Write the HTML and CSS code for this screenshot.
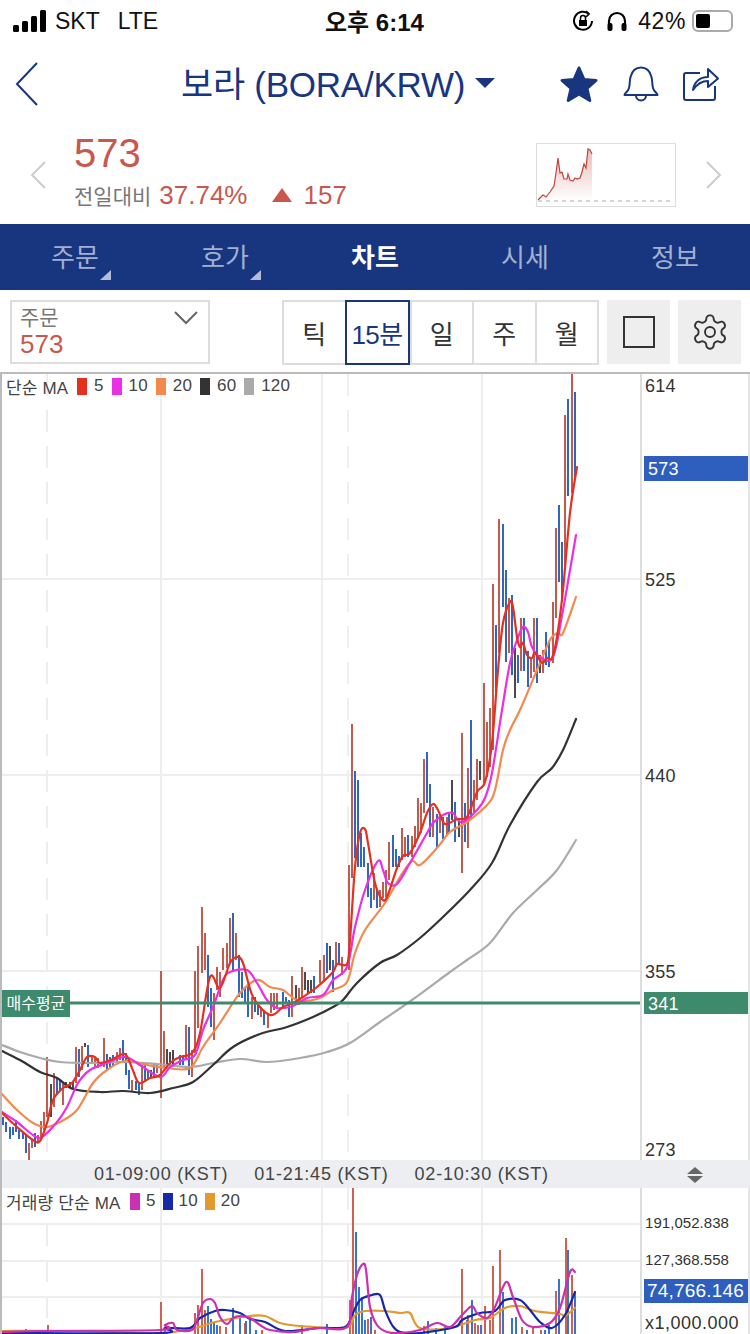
FILE: index.html
```html
<!DOCTYPE html>
<html lang="ko">
<head>
  <meta charset="UTF-8" />
  <meta name="viewport" content="width=device-width, initial-scale=1.0" />
  <title>보라 (BORA/KRW) 차트</title>
  <link rel="stylesheet" href="styles.css">
</head>
<body>
  <div class="status">
    <div class="status-left">
      <svg class="signal" width="33" height="22" viewBox="0 0 33 22"><rect x="0" y="15" width="6" height="7" rx="1.5"/><rect x="9" y="11" width="6" height="11" rx="1.5"/><rect x="18" y="6" width="6" height="16" rx="1.5"/><rect x="27" y="0" width="6" height="22" rx="1.5"/></svg>
      <span class="carrier">SKT</span>
      <span class="carrier">LTE</span>
    </div>
    <div class="status-time">오후 6:14</div>
    <div class="status-right">
      <svg width="22" height="24" viewBox="0 0 22 24" fill="none" stroke="#000" stroke-width="2"><path d="M17 5a9 9 0 1 0 3 7"/><path d="M14 2l3 3-3 3" stroke-width="1.6"/><rect x="7" y="11" width="8" height="6" fill="#000" stroke="none"/><path d="M8.500 11V9a2.500 2.500 0 0 1 5 0v2" stroke-width="1.500"/></svg>
      <svg class="phones" width="20" height="21" viewBox="0 0 20 21" fill="none"><path d="M2 14V10a8 8 0 0 1 16 0v4" stroke="#000" stroke-width="2.200"/><rect x="0.500" y="12" width="5" height="8" rx="2" fill="#000"/><rect x="14.500" y="12" width="5" height="8" rx="2" fill="#000"/></svg>
      <span class="battery-text">42%</span>
      <div class="battery"><div class="battery-fill"></div></div>
    </div>
  </div>

  <div class="header">
    <svg class="back" width="24" height="44" viewBox="0 0 24 44" fill="none" stroke="#18367f" stroke-width="2"><path d="M22 1L2 22l20 21"/></svg>
    <h1 class="title">보라 (BORA/KRW)<span class="title-caret"></span></h1>
    <div class="header-icons">
      <svg width="40" height="38" viewBox="0 0 40 38"><path d="M20 3l5 11.500 12 1-9 8 2.800 12L20 29l-10.800 6.500L12 23.500l-9-8 12-1z" fill="#18367f" stroke="#18367f" stroke-width="3" stroke-linejoin="round"/></svg>
      <svg width="36" height="36" viewBox="0 0 36 36" fill="none" stroke="#18367f" stroke-width="2"><path d="M1.500 29c0-2 3.500-3 4.500-7 1-4 .500-7 1.500-11C9 5 13 1.500 18 1.500S27 5 28.500 11c1 4 .500 7 1.500 11 1 4 4.500 5 4.500 7z" stroke-linejoin="round"/><path d="M13 29.500a5 5 0 0 0 10 0"/></svg>
      <svg width="37" height="35" viewBox="0 0 37 35" fill="none" stroke="#18367f" stroke-width="2"><path d="M17 6H3a2 2 0 0 0-2 2v23a2 2 0 0 0 2 2h27a2 2 0 0 0 2-2V19"/><path d="M10 23c1-8 7-13 15-13V2l10 9.500L25 20v-6c-6 0-11 3-15 9z" stroke-linejoin="round"/></svg>
    </div>
  </div>

  <div class="price-row">
    <svg class="side-arrow" width="16" height="28" viewBox="0 0 16 28" fill="none" stroke="#ccc" stroke-width="2"><path d="M15 1L2 14l13 13"/></svg>
    <div class="price-info">
      <div class="price">573</div>
      <div class="change">
        <span class="change-label">전일대비</span>
        <span class="change-num">37.74%</span>
        <span class="up-mark"></span>
        <span class="change-num">157</span>
      </div>
    </div>
    <div class="spark">
      <svg width="138" height="62" viewBox="537 144 138 62">
        <defs><linearGradient id="sparkfill" x1="0" y1="0" x2="0" y2="1"><stop offset="0" stop-color="#c8584e" stop-opacity=".4"/><stop offset="1" stop-color="#c8584e" stop-opacity="0"/></linearGradient></defs>
        <path fill="url(#sparkfill)" d="M538 200L540 198 543 195 546 197 550 192 554 186 556 173 558 158 560 173 562 172 564 179 567 179 568 174 570 180 573 181 575 178 577 179 580 178 582 172 584 164 586 168 588 149 590 150 592 154V201H538z"/>
        <polyline fill="none" stroke="#c0443a" stroke-width="1.200" points="538,200 540,198 543,195 546,197 550,192 554,186 556,173 558,158 560,173 562,172 564,179 567,179 568,174 570,180 573,181 575,178 577,179 580,178 582,172 584,164 586,168 588,149 590,150 592,154"/>
        <path d="M538 201H671" stroke="#c8c8c8" stroke-width="1.500" stroke-dasharray="4 4"/>
      </svg>
    </div>
    <svg class="side-arrow" width="16" height="28" viewBox="0 0 16 28" fill="none" stroke="#ccc" stroke-width="2"><path d="M1 1l13 13L1 27"/></svg>
  </div>

  <div class="tabs">
    <div class="tab has-corner">주문</div>
    <div class="tab has-corner">호가</div>
    <div class="tab active">차트</div>
    <div class="tab">시세</div>
    <div class="tab">정보</div>
  </div>

  <div class="toolbar">
    <div class="order-select">
      <div class="order-label">주문</div>
      <div class="order-price">573</div>
      <svg class="order-chevron" width="24" height="14" viewBox="0 0 24 14" fill="none" stroke="#666" stroke-width="2"><path d="M1 1l11 11L23 1"/></svg>
    </div>
    <div class="periods">
      <div class="period">틱</div>
      <div class="period selected">15분</div>
      <div class="period">일</div>
      <div class="period">주</div>
      <div class="period">월</div>
    </div>
    <div class="tool-btn"><div class="tool-square"></div></div>
    <div class="tool-btn">
      <svg width="40" height="40" viewBox="0 0 24 24" fill="none" stroke="#333" stroke-width="1.150"><path d="M12.220 2h-.44a2 2 0 0 0-2 2v.18a2 2 0 0 1-1 1.730l-.43.25a2 2 0 0 1-2 0l-.15-.08a2 2 0 0 0-2.730.73l-.22.38a2 2 0 0 0 .73 2.730l.15.1a2 2 0 0 1 1 1.720v.51a2 2 0 0 1-1 1.740l-.15.09a2 2 0 0 0-.73 2.730l.22.38a2 2 0 0 0 2.730.73l.15-.08a2 2 0 0 1 2 0l.43.25a2 2 0 0 1 1 1.730V20a2 2 0 0 0 2 2h.44a2 2 0 0 0 2-2v-.18a2 2 0 0 1 1-1.730l.43-.25a2 2 0 0 1 2 0l.15.08a2 2 0 0 0 2.730-.73l.22-.39a2 2 0 0 0-.73-2.730l-.15-.08a2 2 0 0 1-1-1.740v-.5a2 2 0 0 1 1-1.740l.15-.09a2 2 0 0 0 .73-2.730l-.22-.38a2 2 0 0 0-2.730-.73l-.15.08a2 2 0 0 1-2 0l-.43-.25a2 2 0 0 1-1-1.730V4a2 2 0 0 0-2-2z"/><circle cx="12" cy="12" r="3"/></svg>
    </div>
  </div>

  <div class="chart">
    <div class="panel panel-main">
      <div class="plot">
        <svg width="638" height="786" viewBox="2 374 638 786">
          <path class="grid" d="M2 579H640M2 775H640M2 971H640M161 374V1160M322 374V1160M482 374V1160"/>
          <path class="grid" stroke-dasharray="22 14" d="M47 374V1160M348 374V1160"/>
          <path class="candle-red" d="M29 1143V1160M32 1140V1148M38 1135V1142M41 1121V1140M44 1112V1130M47 1057V1117M54 1073V1107M63 1083V1105M76 1047V1083M82 1046V1070M92 1057V1064M95 1057V1067M98 1058V1068M104 1038V1067M117 1052V1063M120 1048V1060M132 1080V1092M142 1065V1090M157 1063V1073M161 971V1098M164 1031V1067M186 1025V1060M192 1050V1077M195 971V1053M198 946V1028M202 907V973M205 933V970M214 993V1040M217 967V990M220 972V997M223 948V970M227 943V968M230 918V963M236 933V960M252 997V1019M261 1007V1017M268 1013V1028M271 993V1013M274 993V1010M277 993V1008M292 976V1017M299 988V1005M302 967V998M320 960V983M324 955V982M336 942V967M342 957V975M349 865V970M352 724V878M374 873V900M380 890V907M383 882V898M386 870V897M389 842V880M402 828V860M405 837V857M412 836V857M415 826V847M418 798V837M421 803V833M424 759V813M433 807V837M440 817V833M447 817V836M462 733V873M468 768V848M474 780V813M477 759V800M484 683V783M487 722V777M490 708V767M493 584V750M499 519V653M509 598V653M521 618V671M531 657V678M534 618V672M543 650V673M553 602V663M556 528V618M565 415V570M572 373V493"/>
          <path class="candle-blue" d="M3 1117V1125M6 1122V1132M10 1127V1139M13 1127V1135M16 1120V1132M19 1130V1139M23 1133V1139M26 1135V1153M35 1133V1147M57 1077V1095M60 1080V1090M79 1049V1077M88 1045V1067M107 1054V1070M110 1057V1068M113 1055V1066M123 1040V1063M126 1053V1075M129 1070V1089M136 1081V1090M139 1082V1095M145 1063V1082M148 1070V1080M154 1063V1077M180 1055V1065M183 1055V1065M189 1027V1075M208 955V1007M211 988V1027M233 913V972M239 955V997M242 972V998M245 987V1002M248 985V1017M255 997V1012M258 1003V1015M264 1012V1025M283 992V1007M286 997V1003M289 1000V1017M314 976V993M327 943V973M333 960V992M339 943V963M355 771V858M358 780V867M361 833V867M364 847V867M368 863V897M371 888V908M377 890V908M393 835V867M396 849V867M399 856V867M408 835V857M427 752V803M430 784V837M437 814V848M443 817V839M449 812V832M455 802V842M465 803V842M471 720V820M496 625V692M503 524V607M506 570V662M512 595V675M518 655V683M524 618V671M528 651V687M537 618V683M546 632V665M549 642V667M559 505V582M562 542V602M568 399V496M575 392V480"/>
          <path class="candle-gray" d="M51 1084V1117M66 1082V1088M70 1082V1088M73 1082V1088M85 1043V1047M151 1070V1078M167 1049V1065M170 1052V1065M173 1050V1065M296 985V1000M305 972V990M308 980V993M311 980V993M330 946V970M452 780V820M459 820V837M480 761V780M515 648V698M540 655V673"/>
          <polyline class="ma ma120" points="2,1045 20,1052 40,1058 60,1062 93,1063 123,1062 157,1064 190,1067 213,1063 240,1059 267,1062 300,1058 327,1052 350,1043 380,1022 412,1000 450,972 467,960 490,943 513,913 537,890 557,870 576,840"/>
          <polyline class="ma ma60" points="2,1051 20,1060 40,1072 57,1078 73,1089 100,1092 123,1091 150,1093 173,1088 193,1082 213,1065 233,1047 260,1034 287,1027 313,1017 333,1007 343,1000 357,983 380,963 397,955 420,938 443,917 470,890 492,863 510,825 537,782 552,768 563,750 576,719"/>
          <polyline class="ma ma20" points="2,1094 17,1110 33,1123 47,1127 60,1122 77,1110 93,1083 107,1070 125,1061 147,1065 167,1068 190,1068 203,1047 220,1023 240,993 257,980 270,987 283,990 297,1000 317,999 333,990 347,982 355,953 365,930 385,903 400,877 412,861 420,865 437,848 450,832 467,822 487,805 495,790 503,750 510,730 520,710 537,670 550,640 558,633 563,633 576,597"/>
          <polyline class="ma ma10" points="2,1112 17,1122 33,1135 42,1137 57,1122 67,1107 78,1083 90,1070 107,1063 125,1057 140,1065 160,1077 170,1067 183,1060 195,1055 203,1030 213,1007 223,980 230,972 247,970 257,983 267,1000 277,1008 293,1006 307,998 323,995 333,980 347,967 355,927 365,890 378,861 383,870 388,883 397,884 410,863 427,833 433,823 443,815 453,813 457,819 463,822 477,810 485,798 492,773 502,710 510,663 517,640 523,627 528,632 532,647 540,657 553,657 563,610 570,570 576,535"/>
          <polyline class="ma ma5" points="2,1113 17,1127 33,1140 40,1141 47,1123 53,1100 63,1088 72,1083 80,1070 87,1057 95,1057 100,1063 113,1059 125,1054 132,1068 139,1083 150,1078 160,1075 170,1063 180,1057 192,1053 200,1033 210,977 220,988 230,963 237,957 243,963 253,997 270,1015 283,1007 293,1003 303,997 317,987 333,972 337,964 347,964 350,940 355,867 360,833 365,829 368,843 375,883 382,899 387,897 397,868 403,856 410,853 420,833 427,813 433,804 438,810 445,824 457,819 467,817 477,792 485,782 492,743 498,670 503,623 510,602 513,607 517,637 520,647 523,643 527,655 532,658 535,653 542,663 547,658 552,658 557,637 563,590 570,513 577,467"/>
          <path class="avg-line" d="M2 1003H640"/>
        </svg>
        <div class="legend">
          <span class="legend-name">단순 MA</span>
          <span class="swatch sw-red"></span><span>5</span>
          <span class="swatch sw-magenta"></span><span>10</span>
          <span class="swatch sw-orange"></span><span>20</span>
          <span class="swatch sw-black"></span><span>60</span>
          <span class="swatch sw-gray"></span><span>120</span>
        </div>
        <div class="avg-tag">매수평균</div>
      </div>
      <div class="axis">
        <span class="tick" style="top:0px">614</span>
        <span class="tick" style="top:194px">525</span>
        <span class="tick" style="top:390px">440</span>
        <span class="tick" style="top:586px">355</span>
        <span class="tick" style="top:764px">273</span>
        <span class="axis-tag tag-blue" style="top:82px">573</span>
        <span class="axis-tag tag-green" style="top:618px">341</span>
      </div>
    </div>

    <div class="time-bar">
      <span class="time-label">01-09:00 (KST)</span>
      <span class="time-label">01-21:45 (KST)</span>
      <span class="time-label">02-10:30 (KST)</span>
      <div class="resize"><span class="resize-up"></span><span class="resize-down"></span></div>
    </div>

    <div class="panel panel-vol">
      <div class="plot">
        <svg width="638" height="146" viewBox="2 1188 638 146">
          <path class="grid" d="M2 1224H640M2 1261H640M2 1297H640M161 1188V1334M322 1188V1334M482 1188V1334"/>
          <path class="grid" stroke-dasharray="22 14" d="M47 1188V1334M348 1188V1334"/>
          <path class="vol-red" d="M48 1325V1334M161 1302V1334M165 1328V1334M195 1313V1334M198 1305V1334M202 1269V1334M205 1310V1334M220 1326V1334M226 1327V1334M245 1323V1334M262 1330V1334M302 1325V1334M350 1300V1334M353 1188V1334M368 1319V1334M375 1330V1334M400 1332V1334M424 1326V1334M462 1269V1334M468 1315V1334M475 1323V1334M478 1325V1334M485 1306V1334M490 1320V1334M493 1266V1334M500 1250V1334M522 1327V1334M533 1328V1334M541 1330V1334M556 1291V1334M566 1238V1334M572 1275V1334"/>
          <path class="vol-blue" d="M26 1329V1334M208 1306V1334M211 1319V1334M214 1322V1334M217 1325V1334M233 1308V1334M240 1318V1334M246 1321V1334M250 1320V1334M256 1330V1334M327 1324V1334M356 1232V1334M359 1287V1334M362 1297V1334M365 1320V1334M371 1317V1334M428 1321V1334M436 1328V1334M445 1327V1334M467 1320V1334M472 1300V1334M481 1325V1334M503 1292V1334M512 1318V1334M516 1317V1334M527 1330V1334M545 1330V1334M549 1325V1334M559 1279V1334M568 1250V1334M575 1292V1334"/>
          <polyline class="vma vma20" points="2,1331 80,1331 160,1333 195,1328 215,1322 250,1316 265,1316 280,1323 300,1326 345,1328 355,1315 365,1311 385,1311 400,1313 410,1313 420,1328 450,1328 475,1320 490,1318 505,1308 520,1306 535,1311 560,1314 565,1316 575,1308"/>
          <polyline class="vma vma10" points="2,1333 160,1333 165,1328 190,1328 200,1318 215,1311 225,1310 240,1313 250,1319 265,1322 285,1331 320,1328 345,1327 352,1315 360,1300 372,1295 380,1295 385,1310 392,1325 400,1332 420,1333 455,1327 462,1320 480,1313 495,1311 505,1300 520,1300 530,1310 540,1322 552,1328 565,1315 575,1292"/>
          <polyline class="vma vma5" points="2,1332 47,1331 160,1330 165,1325 173,1323 177,1330 192,1330 197,1320 203,1303 210,1299 215,1303 220,1317 227,1324 233,1318 240,1316 250,1318 260,1325 270,1330 293,1332 317,1328 347,1327 352,1297 357,1275 363,1264 366,1270 370,1307 377,1325 387,1332 400,1333 420,1330 437,1323 450,1327 462,1315 472,1306 477,1313 487,1318 495,1307 506,1282 513,1297 522,1320 533,1327 550,1323 560,1308 570,1272 575,1272"/>
        </svg>
        <div class="legend legend-vol">
          <span class="legend-name">거래량 단순 MA</span>
          <span class="swatch sw-vol5"></span><span>5</span>
          <span class="swatch sw-vol10"></span><span>10</span>
          <span class="swatch sw-vol20"></span><span>20</span>
        </div>
      </div>
      <div class="axis">
        <span class="tick tick-small" style="top:24px">191,052.838</span>
        <span class="tick tick-small" style="top:61px">127,368.558</span>
        <span class="axis-tag tag-blue tag-vol" style="top:91px">74,766.146</span>
        <span class="tick tick-unit" style="top:123px">x1,000.000</span>
      </div>
    </div>
  </div>
  <script src="chart.js"></script>
</body>
</html>
```

FILE: styles.css
```css
* {
  box-sizing: border-box;
}
html, body {
  margin: 0;
  padding: 0;
}
body {
  width: 750px;
  height: 1334px;
  overflow: hidden;
  background: #fff;
  font-family: "Liberation Sans", "Noto Sans CJK KR", sans-serif;
  color: #333;
}

/* status bar */
.status {
  height: 42px;
  display: flex;
  align-items: center;
  justify-content: space-between;
  padding: 0 13px;
  position: relative;
  color: #111;
  font-size: 23px;
}
.status-left {
  display: flex;
  align-items: center;
}
.signal {
  margin-right: 9px;
}
.carrier {
  margin-right: 18px;
}
.status-time {
  position: absolute;
  left: 325px;
  top: 3px;
  font-weight: 700;
  font-size: 24px;
}
.status-right {
  display: flex;
  align-items: center;
}
.phones {
  margin-left: 13px;
}
.battery-text {
  margin-left: 11px;
  letter-spacing: .6px;
}
.battery {
  width: 41px;
  height: 22px;
  margin-left: 6px;
  margin-right: 4px;
  border: 2px solid #aaa;
  border-radius: 6px;
  padding: 2px;
}
.battery-fill {
  width: 14px;
  height: 14px;
  background: #000;
  border-radius: 2px;
}

/* title */
.header {
  height: 84px;
  position: relative;
  display: flex;
  align-items: center;
  padding: 0 0 6px 181px;
}
.back {
  position: absolute;
  left: 15px;
  top: 20px;
}
.title {
  margin: 0;
  font-size: 35px;
  font-weight: 400;
  color: #18367f;
  letter-spacing: -.25px;
  display: flex;
  align-items: center;
}
.title-caret {
  width: 0;
  height: 0;
  margin: 4px 0 0 10px;
  border-left: 10px solid transparent;
  border-right: 10px solid transparent;
  border-top: 10px solid #18367f;
}
.header-icons {
  position: absolute;
  left: 559px;
  top: 23px;
  display: flex;
  align-items: center;
  gap: 24px;
}

/* price */
.price-row {
  height: 98px;
  display: flex;
  align-items: center;
  padding: 0 28px 0 30px;
}
.price-info {
  width: 462px;
  margin: -10px 0 0 28px;
}
.price {
  font-size: 40px;
  line-height: 46px;
  color: #c8584e;
}
.change {
  display: flex;
  align-items: center;
  margin-top: 4px;
  height: 30px;
}
.change-label {
  font-size: 21px;
  color: #777;
  margin-right: 8px;
}
.change-num {
  font-size: 26px;
  color: #c8584e;
}
.up-mark {
  width: 0;
  height: 0;
  margin: 0 11px 0 25px;
  border-left: 10px solid transparent;
  border-right: 10px solid transparent;
  border-bottom: 14px solid #c8584e;
}
.spark {
  width: 140px;
  height: 64px;
  border: 1px solid #ddd;
  margin-right: 30px;
}
.spark svg {
  display: block;
}

/* tabs */
.tabs {
  height: 66px;
  background: #18367f;
  display: grid;
  grid-template-columns: repeat(5, 150px);
}
.tab {
  position: relative;
  display: flex;
  align-items: center;
  justify-content: center;
  padding-bottom: 4px;
  font-size: 26px;
  color: #a3afcf;
}
.tab.active {
  color: #fff;
  font-weight: 700;
}
.tab.has-corner::after {
  content: "";
  position: absolute;
  left: 100px;
  top: 46px;
  border-left: 11px solid transparent;
  border-bottom: 10px solid #b4bdd8;
}

/* toolbar */
.toolbar {
  height: 82px;
  display: flex;
  align-items: flex-start;
  padding: 10px 0 0 10px;
}
.order-select {
  position: relative;
  width: 200px;
  height: 64px;
  border: 2px solid #ddd;
  padding: 3px 8px;
}
.order-label {
  font-size: 21px;
  line-height: 26px;
  color: #777;
}
.order-price {
  font-size: 26px;
  line-height: 26px;
  color: #c8584e;
}
.order-chevron {
  position: absolute;
  right: 10px;
  top: 9px;
}
.periods {
  width: 317px;
  height: 65px;
  margin-left: 72px;
  border: 2px solid #ddd;
  display: flex;
}
.period {
  flex: 1;
  display: flex;
  align-items: center;
  justify-content: center;
  font-size: 26px;
  color: #333;
  border-left: 2px solid #ddd;
}
.period:first-child {
  border-left: 0;
}
.period.selected {
  color: #18367f;
  outline: 2px solid #18367f;
  outline-offset: -2px;
  margin-top: -2px;
  margin-bottom: -2px;
  border-left: 0;
  flex: 0 0 65px;
  letter-spacing: -.6px;
  z-index: 1;
}
.tool-btn {
  width: 63px;
  height: 64px;
  margin-left: 8px;
  background: #eee;
  display: flex;
  align-items: center;
  justify-content: center;
}
.tool-square {
  width: 32px;
  height: 32px;
  border: 2px solid #333;
}

/* chart */
.chart {
  border-top: 2px solid #bbb;
  border-left: 2px solid #bbb;
}
.panel {
  display: flex;
}
.panel-main {
  height: 786px;
}
.panel-vol {
  height: 146px;
}
.plot {
  position: relative;
  width: 638px;
}
.plot svg {
  display: block;
}
.axis {
  position: relative;
  flex: 1;
  border-left: 2px solid #ddd;
  border-right: 2px solid #e4e4e4;
}
.grid {
  stroke: #eee;
  stroke-width: 2;
  fill: none;
}
.candle-red, .candle-blue, .candle-gray, .vol-red, .vol-blue {
  fill: none;
  stroke-width: 2;
}
.candle-red {
  stroke: #c25b4e;
}
.candle-blue {
  stroke: #2f66c4;
}
.candle-gray {
  stroke: #4a4a4a;
}
.vol-red {
  stroke: #d0604f;
}
.vol-blue {
  stroke: #3a72cf;
}
.ma, .vma {
  fill: none;
  stroke-width: 2.2;
  stroke-linejoin: round;
  stroke-linecap: round;
}
.ma5 {
  stroke: #e6301f;
}
.ma10 {
  stroke: #ea2fe6;
}
.ma20 {
  stroke: #f28a50;
}
.ma60 {
  stroke: #333;
}
.ma120 {
  stroke: #aaa;
}
.vma5 {
  stroke: #cc2fb0;
}
.vma10 {
  stroke: #1428a8;
}
.vma20 {
  stroke: #e09a30;
}
.avg-line {
  stroke: #3d8a6d;
  stroke-width: 3;
}
.legend {
  position: absolute;
  left: 4px;
  top: 2px;
  display: flex;
  align-items: center;
  height: 20px;
  font-size: 17px;
  color: #444;
  letter-spacing: .15px;
}
.legend-name {
  width: 71px;
  white-space: nowrap;
}
.swatch {
  width: 10px;
  height: 17px;
  margin-right: 7px;
}
.legend span:not(.swatch):not(.legend-name) {
  margin-right: 8px;
}
.legend-vol {
  top: 3px;
}
.legend-vol .legend-name {
  width: 124px;
}
.legend-vol .swatch {
  margin-right: 6px;
}
.legend-vol span:not(.swatch):not(.legend-name) {
  margin-right: 7px;
}
.sw-red {
  background: #e6301f;
}
.sw-magenta {
  background: #ea2fe6;
}
.sw-orange {
  background: #f28a50;
}
.sw-black {
  background: #333;
}
.sw-gray {
  background: #aaa;
}
.sw-vol5 {
  background: #cc2fb0;
}
.sw-vol10 {
  background: #1428a8;
}
.sw-vol20 {
  background: #e09a30;
}
.avg-tag {
  position: absolute;
  left: 0;
  top: 616px;
  width: 68px;
  height: 27px;
  background: #3d8a6d;
  color: #fff;
  font-size: 16px;
  line-height: 27px;
  text-align: center;
  white-space: nowrap;
}
.tick {
  position: absolute;
  left: 3px;
  margin-top: 1px;
  font-size: 18px;
  line-height: 22px;
  color: #333;
  letter-spacing: .3px;
  white-space: nowrap;
}
.tick-small {
  font-size: 15px;
  line-height: 20px;
  letter-spacing: .05px;
}
.tick-unit {
  font-size: 18px;
  letter-spacing: .5px;
}
.axis-tag {
  position: absolute;
  left: 2px;
  width: 104px;
  color: #fff;
  font-size: 18px;
  padding: 1px 0 0 4px;
  white-space: nowrap;
  letter-spacing: .3px;
}
.tag-blue {
  background: #2e5fbe;
  height: 25px;
  line-height: 25px;
}
.tag-green {
  background: #3d8a6d;
  height: 22px;
  line-height: 22px;
}
.tag-vol {
  font-size: 19px;
  height: 24px;
  line-height: 24px;
  padding: 0 0 0 3px;
  letter-spacing: .2px;
}
.time-bar {
  position: relative;
  height: 28px;
  background: #eceef1;
  display: flex;
  align-items: center;
  padding-left: 92px;
  gap: 26px;
  font-size: 18px;
  color: #444;
}
.time-label {
  letter-spacing: .8px;
  white-space: nowrap;
}
.resize {
  position: absolute;
  left: 685px;
  top: 7px;
  display: flex;
  flex-direction: column;
  gap: 2px;
}
.resize-up {
  border-left: 8px solid transparent;
  border-right: 8px solid transparent;
  border-bottom: 7px solid #666;
}
.resize-down {
  border-left: 8px solid transparent;
  border-right: 8px solid transparent;
  border-top: 7px solid #666;
}
```

FILE: chart.js
```js
// turn the moving average polylines into smooth curves (catmull-rom to bezier)
document.querySelectorAll('polyline.ma, polyline.vma').forEach(function (line) {
  const pts = line.getAttribute('points').trim().split(/\s+/).map(function (p) {
    return p.split(',').map(Number);
  });
  let d = 'M' + pts[0][0] + ' ' + pts[0][1];
  for (let i = 0; i < pts.length - 1; i++) {
    const p0 = pts[i - 1] || pts[i];
    const p1 = pts[i];
    const p2 = pts[i + 1];
    const p3 = pts[i + 2] || p2;
    const c1x = p1[0] + (p2[0] - p0[0]) / 6;
    const c1y = p1[1] + (p2[1] - p0[1]) / 6;
    const c2x = p2[0] - (p3[0] - p1[0]) / 6;
    const c2y = p2[1] - (p3[1] - p1[1]) / 6;
    d += 'C' + c1x + ' ' + c1y + ' ' + c2x + ' ' + c2y + ' ' + p2[0] + ' ' + p2[1];
  }
  const path = document.createElementNS('http://www.w3.org/2000/svg', 'path');
  path.setAttribute('class', line.getAttribute('class'));
  path.setAttribute('d', d);
  line.replaceWith(path);
});
```
